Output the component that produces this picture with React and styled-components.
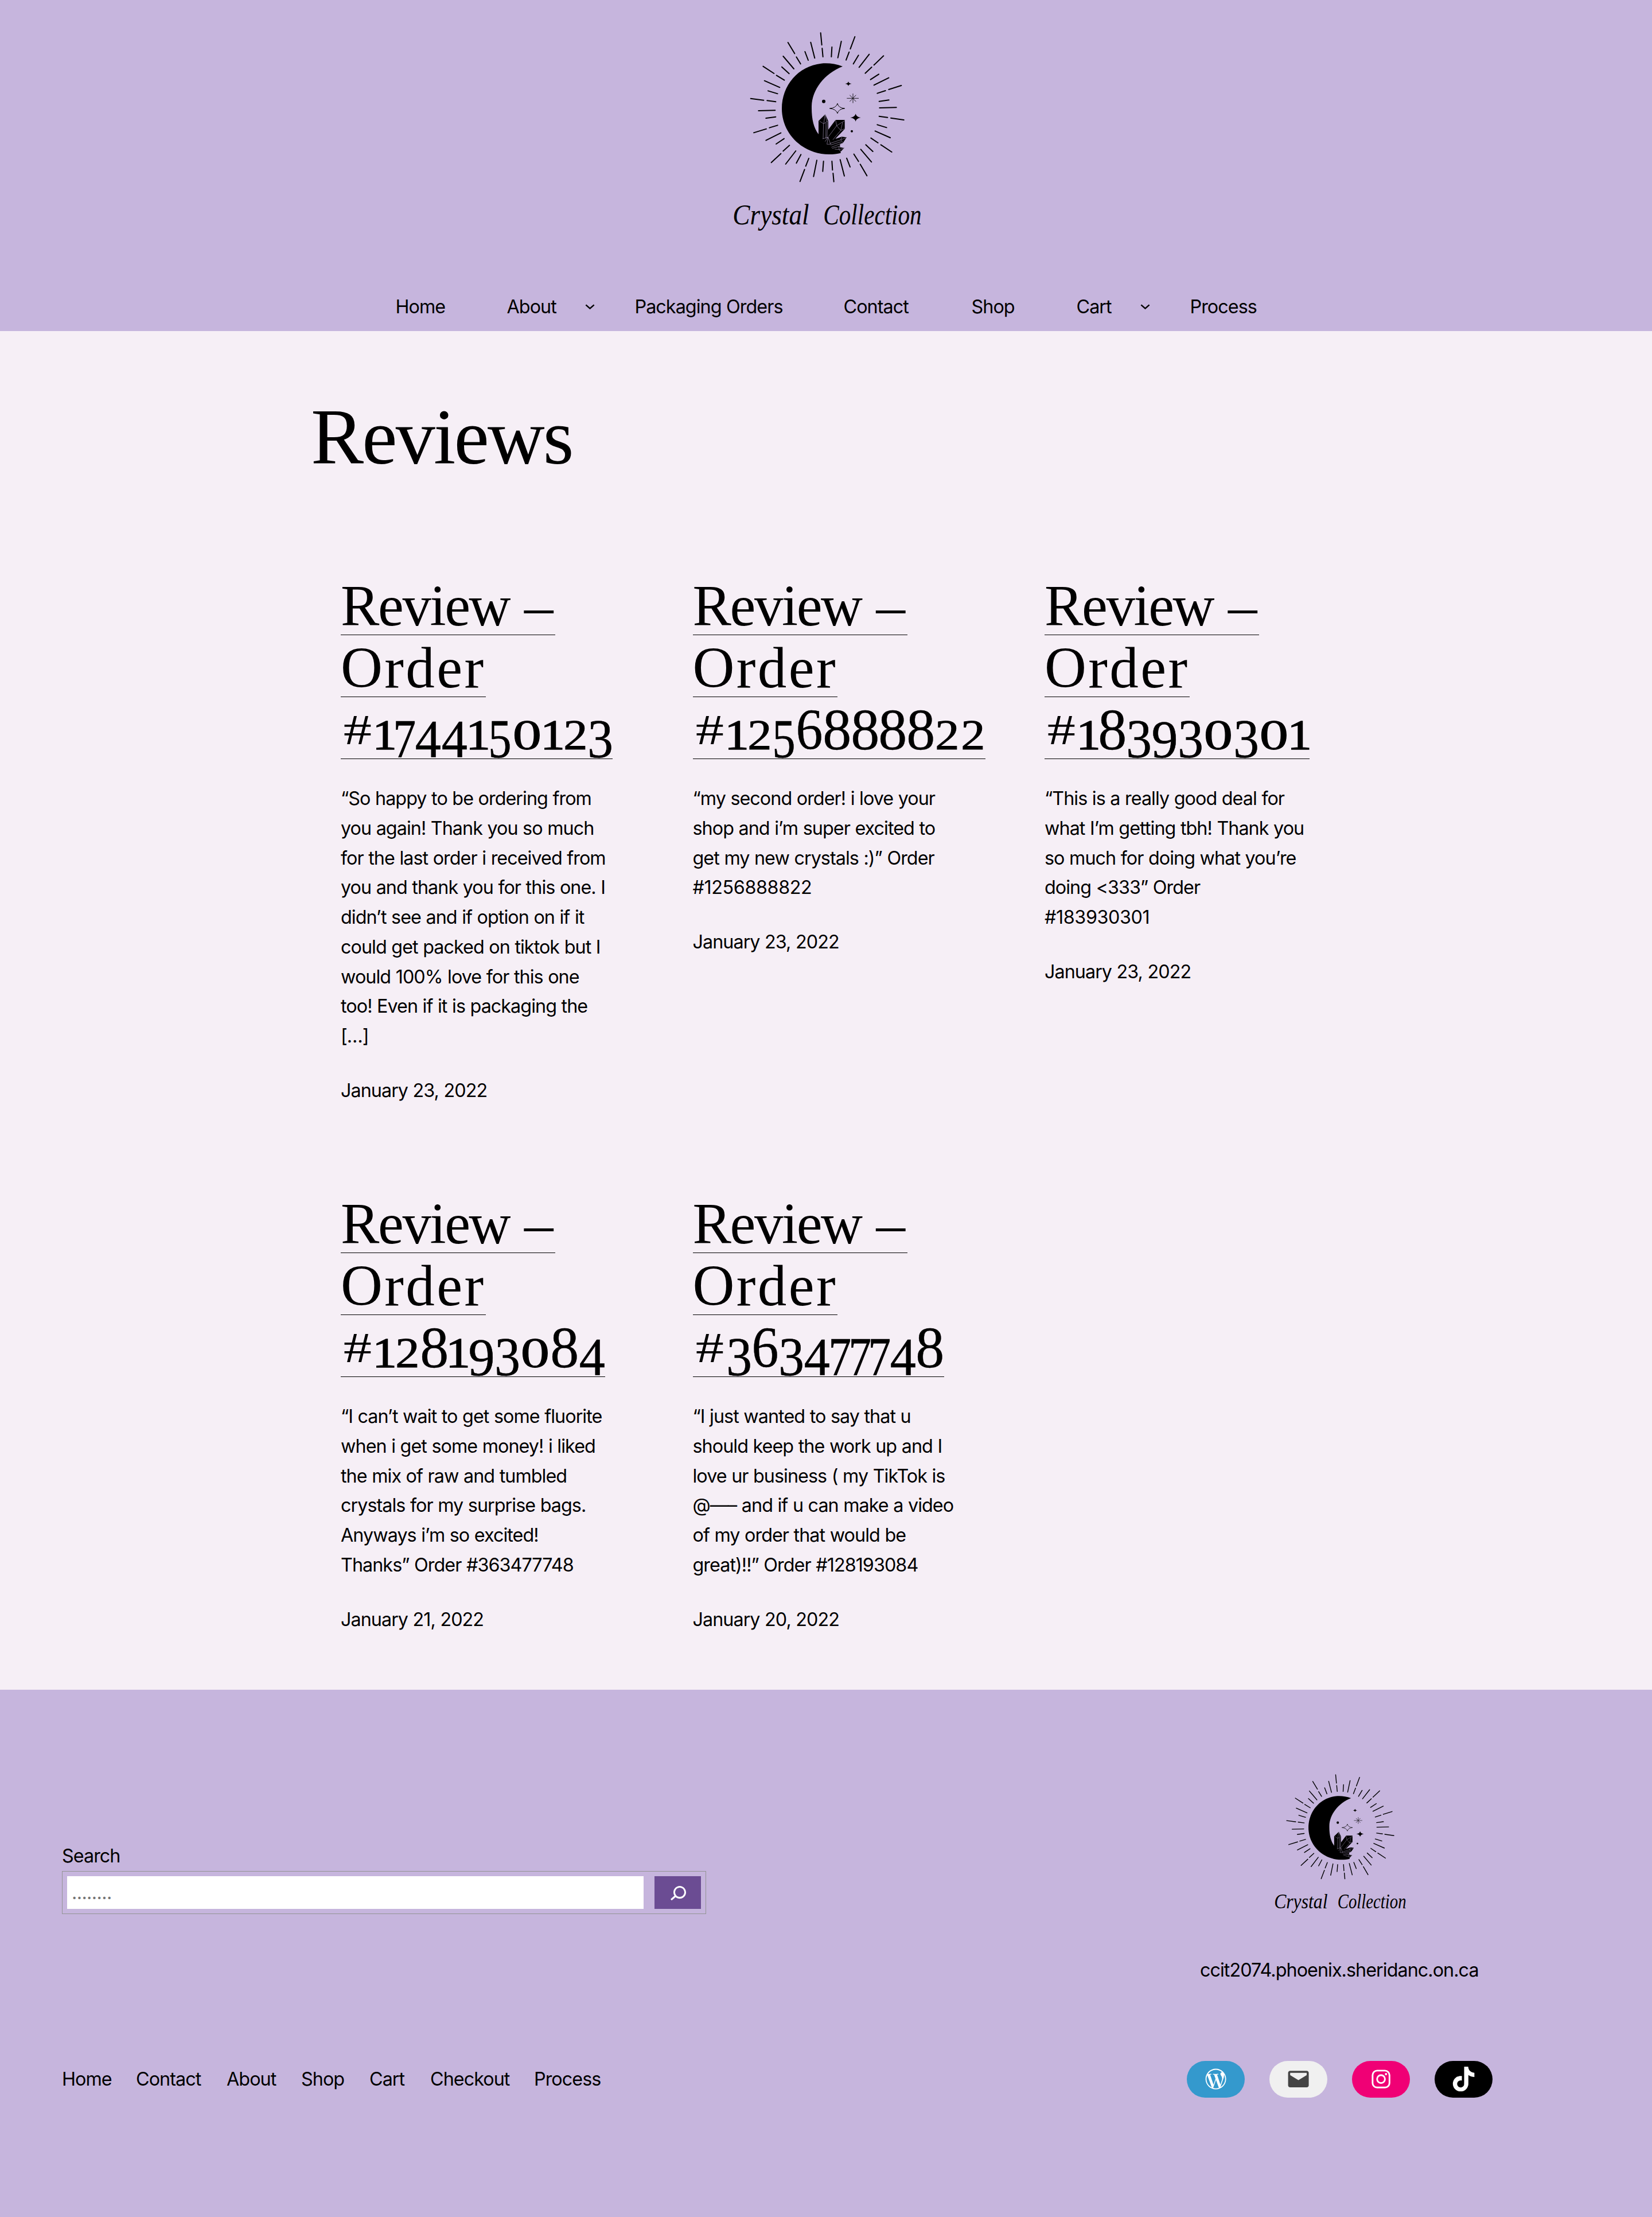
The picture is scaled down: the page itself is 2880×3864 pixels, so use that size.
import React from "react";
import styled, { createGlobalStyle } from "styled-components";

const colors = { lilac: "#c6b5dd", blush: "#f6eff6", plum: "#6b4c93", ink: "#000" };

const GlobalStyle = createGlobalStyle`
  * { box-sizing: border-box; }
  body { margin: 0; background: ${colors.lilac}; color: ${colors.ink}; font-family: Inter, "Noto Sans", sans-serif; font-size: 32.3px; line-height: 51.75px; letter-spacing: -0.95px; word-spacing: 0.4px; }
  h1, h2, p { margin: 0; font-weight: 400; }
  a { color: inherit; text-decoration: none; }
`;

const Page = styled.div`
  width: 2880px;
  height: 3864px;
  display: flex;
  flex-direction: column;
`;

const Header = styled.header`
  height: 577px;
  padding-top: 30px;
  background: ${colors.lilac};
  display: flex;
  flex-direction: column;
  align-items: center;
`;

const LogoSvg = styled.svg`
  display: block;
  flex: none;
  overflow: visible;
  width: ${(p) => p.$size}px;
  height: ${(p) => p.$size}px;
`;

const Wordmark = styled.text`
  font-family: "Liberation Serif", serif;
  font-style: italic;
  font-size: 150px;
  letter-spacing: 0;
`;

const Nav = styled.nav`
  display: flex;
  align-items: center;
  margin-top: 79px;
`;

const NavItem = styled.div`
  display: flex;
  align-items: center;
  width: ${(p) => p.$width}px;
  white-space: nowrap;
`;

const Chevron = styled.svg`
  width: 19px;
  height: 19px;
  margin-left: 49px;
  fill: none;
  stroke: ${colors.ink};
  stroke-width: 1.5;
`;

const Main = styled.main`
  height: 2368px;
  padding: 110px 0 0 542px;
  background: ${colors.blush};
`;

const Title = styled.h1`
  font-family: "Liberation Serif", serif;
  font-size: 138px;
  line-height: 150px;
  letter-spacing: -2.8px;
`;

const Grid = styled.div`
  display: grid;
  grid-template-columns: repeat(3, 613.5px);
  grid-template-rows: 1077px auto;
  padding: 162px 0 0 52px;
`;

const CardTitle = styled.h2`
  font-family: "Liberation Serif", serif;
  font-size: 101px;
  line-height: 115px;
  word-spacing: 3px;
  margin-bottom: 43px;
`;

const TitleLine = styled.span`
  display: block;
  width: ${(p) => (p.$width ? `${p.$width}px` : "fit-content")};
  height: 108px;
  white-space: nowrap;
  letter-spacing: ${(p) => p.$spacing || 0}px;
  border-bottom: 1px solid ${colors.ink};
`;

const Digit = styled.span`
  display: inline-flex;
  justify-content: center;
  width: ${(p) => p.$w}px;
  font-size: ${(p) => p.$size}px;
  line-height: 1;
  -webkit-text-stroke: ${(p) => p.$stroke}px ${colors.ink};
  transform: translateY(${(p) => p.$dy}px) scaleX(${(p) => p.$sx});
`;

const Excerpt = styled.p`
  white-space: pre;
`;

const OrderNumber = styled.span`
  letter-spacing: -0.4px;
`;

const PostDate = styled.p`
  margin-top: 43px;
`;

const Footer = styled.footer`
  flex: 1;
  background: ${colors.lilac};
  padding: 129px 278px 0 108px;
`;

const FooterTop = styled.div`
  display: flex;
  justify-content: space-between;
`;

const SearchForm = styled.form`
  width: 1123px;
  padding-top: 135px;
`;

const SearchLabel = styled.label`
  display: block;
  height: 52px;
`;

const SearchBox = styled.div`
  display: flex;
  justify-content: space-between;
  height: 75px;
  padding: 8px;
  border: 1px solid #949494;
`;

const SearchInput = styled.input`
  width: 1005px;
  height: 57px;
  padding: 0 8px;
  border: 0;
  background: #fff;
  font: inherit;
  letter-spacing: -0.6px;
  &::placeholder { color: #757575; opacity: 1; }
`;

const SearchButton = styled.button`
  width: 81px;
  height: 57px;
  padding: 0;
  border: 0;
  background: ${colors.plum};
  display: flex;
  align-items: center;
  justify-content: center;
`;

const SearchIcon = styled.svg`
  width: 48px;
  height: 48px;
  fill: #fff;
`;

const Brand = styled.div`
  width: 518px;
  display: flex;
  flex-direction: column;
  padding-left: 8px;
`;

const BrandLogo = styled.div`
  padding-left: 102.5px;
`;

const SiteAddress = styled.p`
  margin-top: 54px;
  white-space: nowrap;
`;

const FooterBottom = styled.div`
  display: flex;
  align-items: center;
  justify-content: space-between;
  height: 64px;
  margin-top: 132px;
`;

const FooterNav = styled.nav`
  display: flex;
`;

const Social = styled.div`
  display: flex;
  gap: 43px;
`;

const SocialLink = styled.a`
  width: 101px;
  height: 64px;
  border-radius: 32px;
  background: ${(p) => p.$bg};
  color: ${(p) => p.$fg};
  display: flex;
  align-items: center;
  justify-content: center;
  svg { width: 43.2px; height: 43.2px; fill: currentColor; }
`;

const rays = [
  [572, 82, 578, 145], [580, 163, 584, 207], [520, 131, 541, 214], [490, 180, 507, 225],
  [401, 132, 436, 190], [445, 208, 467, 244], [376, 204, 432, 270], [369, 260, 407, 295],
  [271, 257, 328, 294], [341, 304, 382, 329], [278, 332, 358, 367], [297, 385, 347, 400],
  [206, 425, 274, 434], [292, 436, 337, 442], [247, 489, 334, 487], [286, 528, 337, 521],
  [222, 604, 288, 584], [304, 578, 347, 565], [286, 644, 364, 605], [339, 663, 381, 635],
  [314, 760, 364, 713], [376, 700, 409, 670], [389, 768, 442, 699], [445, 763, 469, 718],
  [464, 859, 488, 796], [494, 779, 510, 738], [535, 833, 552, 748], [583, 806, 587, 753],
  [641, 860, 637, 816], [634, 799, 631, 753], [696, 830, 674, 745], [726, 783, 708, 737],
  [814, 829, 779, 769], [770, 754, 746, 716], [838, 757, 782, 691], [845, 702, 808, 667],
  [944, 705, 887, 667], [872, 657, 835, 632], [936, 630, 857, 595], [917, 577, 868, 562],
  [1007, 537, 939, 527], [922, 524, 878, 518], [968, 472, 880, 474], [929, 433, 878, 440],
  [994, 357, 928, 378], [911, 384, 868, 398], [928, 317, 851, 355], [876, 298, 833, 326],
  [901, 202, 851, 250], [839, 261, 805, 293], [826, 194, 773, 262], [770, 199, 743, 244],
  [751, 102, 727, 166], [721, 182, 705, 224], [680, 126, 662, 212], [631, 156, 628, 207],
];

function Logo({ size }) {
  return (
    <LogoSvg $size={size} viewBox="0 0 1200 1200" role="img" aria-label="Crystal Collection">
      <g stroke="#000" strokeWidth="6" strokeLinecap="round">
        {rays.map(([x1, y1, x2, y2], i) => (
          <line key={i} x1={x1} y1={y1} x2={x2} y2={y2} />
        ))}
      </g>
      <path d="M687 257C650 243 612 239 575 242C455 255 369 356 369 478C369 610 478 716 615 717C640 717 658 715 677 710L670 640L561 612C535 578 524 530 525 465C527 380 590 295 687 257Z" />
      <circle cx="588" cy="440" r="9" />
      <circle cx="735" cy="596" r="6" />
      <path d="M717 336Q719 347 734 348Q719 350 717 360Q715 350 700 348Q715 347 717 336Z" />
      <path d="M755 505Q759 522 782 525Q759 528 755 545Q751 528 727 525Q751 522 755 505Z" />
      <path d="M660 451Q665 475 698 477Q665 480 660 503Q653 480 619 477Q653 475 660 451Z" fill="none" stroke="#000" strokeWidth="3" />
      <path d="M741 399V449M709 424H771M724 407L757 441M757 407L724 441" stroke="#000" strokeWidth="2.5" />
      <g stroke={colors.lilac} strokeWidth="1.6" strokeLinejoin="round">
        <path d="M561 640V542L596 508L612 544V640Z" stroke="none" fill="#000" />
        <path d="M612 588L650 537H698V584L640 645H612Z" stroke="none" fill="#000" />
        <path d="M610 650L682 625L708 628L689 657L650 677L696 683L677 703L650 710L590 690Z" stroke="none" fill="#000" />
        <path fill="none" d="M565 543L588 557L610 543M588 557L595 510L605 546M587 557L585 636M600 552L599 634M608 546L605 632M582 636L611 627M650 537L656 567L698 541M656 567L677 592L697 583M677 592L687 550M656 567L613 624M677 592L636 641M611 627L595 650M611 627L605 664H624L611 627M620 660L677 641L683 626M677 641L705 630M677 641L689 657M624 668L680 651M628 680L684 658M632 686L668 676L694 683M646 690L668 692L694 686M668 676V692L677 702" />
      </g>
      <Wordmark x="112" y="1082" textLength="400" lengthAdjust="spacingAndGlyphs">Crystal</Wordmark>
      <Wordmark x="586" y="1082" textLength="514" lengthAdjust="spacingAndGlyphs">Collection</Wordmark>
    </LogoSvg>
  );
}

// Advance, font size, horizontal scale, drop and stroke that give lining figures an old-style shape.
const figures = {
  "#": [59, 73, 1.35, -9, 0],
  0: [54, 74, 1.36, 0, 1],
  1: [35, 74, 1.14, 0, 1.6],
  2: [44.5, 74, 1.14, 0, 1],
  3: [43, 95, 0.94, 14, 0.6],
  4: [46.5, 94, 0.96, 13, 0.6],
  5: [41, 96, 0.84, 14, 0.6],
  6: [48, 102, 0.92, 0, 0.4],
  7: [34.5, 95, 0.84, 14, 0.6],
  8: [48.5, 102, 0.98, 0, 0.4],
  9: [47, 94, 0.98, 14, 0.6],
};

function OldStyle({ text }) {
  return [...text].map((c, i) => {
    const [w, size, sx, dy, stroke] = figures[c];
    return <Digit key={i} $w={w} $size={size} $sx={sx} $dy={dy} $stroke={stroke}>{c}</Digit>;
  });
}

const reviews = [
  {
    order: "#1744150123",
    date: "January 23, 2022",
    text: "“So happy to be ordering from\nyou again! Thank you so much\nfor the last order i received from\nyou and thank you for this one. I\ndidn’t see and if option on if it\ncould get packed on tiktok but I\nwould 100% love for this one\ntoo! Even if it is packaging the\n[…]",
  },
  {
    order: "#1256888822",
    date: "January 23, 2022",
    text: "“my second order! i love your\nshop and i’m super excited to\nget my new crystals :)” Order\n#1256888822",
  },
  {
    order: "#183930301",
    date: "January 23, 2022",
    text: "“This is a really good deal for\nwhat I’m getting tbh! Thank you\nso much for doing what you’re\ndoing <333” Order\n#183930301",
  },
  {
    order: "#128193084",
    date: "January 21, 2022",
    text: "“I can’t wait to get some fluorite\nwhen i get some money! i liked\nthe mix of raw and tumbled\ncrystals for my surprise bags.\nAnyways i’m so excited!\nThanks” Order #363477748",
  },
  {
    order: "#363477748",
    date: "January 20, 2022",
    text: "“I just wanted to say that u\nshould keep the work up and I\nlove ur business ( my TikTok is\n@—– and if u can make a video\nof my order that would be\ngreat)!!” Order #128193084",
  },
];

const navItems = [
  ["Home", 194], ["About", 223, true], ["Packaging Orders", 364], ["Contact", 223],
  ["Shop", 183], ["Cart", 198, true], ["Process", 116],
];

const footerItems = [
  ["Home", 129], ["Contact", 158], ["About", 130], ["Shop", 119], ["Cart", 106], ["Checkout", 181], ["Process", 120],
];

export default function App() {
  return (
    <Page>
      <GlobalStyle />
      <Header>
        <Logo size={400} />
        <Nav>
          {navItems.map(([label, width, sub]) => (
            <NavItem key={label} $width={width}>
              <a href="#">{label}</a>
              {sub && <Chevron viewBox="0 0 12 12"><path d="M1.5 4L6 8L10.5 4" /></Chevron>}
            </NavItem>
          ))}
        </Nav>
      </Header>
      <Main>
        <Title>Reviews</Title>
        <Grid>
          {reviews.map((r) => (
            <article key={r.order}>
              <CardTitle>
                <a href="#">
                  <TitleLine $width={374} $spacing={-2.4}>Review –</TitleLine>
                  <TitleLine $width={252.5} $spacing={3.4}>Order</TitleLine>
                  <TitleLine><OldStyle text={r.order} /></TitleLine>
                </a>
              </CardTitle>
              <Excerpt>
                {r.text.split(/(^#\d+)/m).filter(Boolean).map((part, i) =>
                  part.startsWith("#") ? <OrderNumber key={i}>{part}</OrderNumber> : part
                )}
              </Excerpt>
              <PostDate>{r.date}</PostDate>
            </article>
          ))}
        </Grid>
      </Main>
      <Footer>
        <FooterTop>
          <SearchForm>
            <SearchLabel htmlFor="search">Search</SearchLabel>
            <SearchBox>
              <SearchInput id="search" placeholder="........" />
              <SearchButton type="button" aria-label="Search">
                <SearchIcon viewBox="0 0 24 24">
                  <path d="M13.5 6C10.5 6 8 8.5 8 11.5c0 1.1.3 2.1.9 3l-3.4 3 1 1.1 3.4-2.9c1 .9 2.2 1.4 3.6 1.4 3 0 5.5-2.5 5.5-5.5C19 8.5 16.5 6 13.5 6zm0 9.5c-2.2 0-4-1.8-4-4s1.8-4 4-4 4 1.8 4 4-1.8 4-4 4z" />
                </SearchIcon>
              </SearchButton>
            </SearchBox>
          </SearchForm>
          <Brand>
            <BrandLogo>
              <Logo size={280} />
            </BrandLogo>
            <SiteAddress>ccit2074.phoenix.sheridanc.on.ca</SiteAddress>
          </Brand>
        </FooterTop>
        <FooterBottom>
          <FooterNav>
            {footerItems.map(([label, width]) => (
              <NavItem key={label} $width={width}><a href="#">{label}</a></NavItem>
            ))}
          </FooterNav>
          <Social>
            <SocialLink href="#" aria-label="WordPress" $bg="#3499cd" $fg="#fff">
              <svg viewBox="0 0 24 24"><path d="M12.158,12.786L9.46,20.625c0.806,0.237,1.657,0.366,2.54,0.366c1.047,0,2.051-0.181,2.986-0.51c-0.024-0.038-0.046-0.079-0.065-0.124L12.158,12.786z M3.009,12c0,3.559,2.068,6.634,5.067,8.092L3.788,8.341C3.289,9.459,3.009,10.696,3.009,12z M18.069,11.546c0-1.112-0.399-1.881-0.741-2.48c-0.456-0.741-0.883-1.368-0.883-2.109c0-0.826,0.627-1.596,1.51-1.596c0.04,0,0.078,0.005,0.116,0.007C16.472,3.904,14.34,3.009,12,3.009c-3.141,0-5.904,1.612-7.512,4.052c0.211,0.007,0.41,0.011,0.579,0.011c0.94,0,2.396-0.114,2.396-0.114C7.947,6.93,8.004,7.642,7.52,7.699c0,0-0.487,0.057-1.029,0.085l3.274,9.739l1.968-5.901l-1.401-3.838C9.848,7.756,9.389,7.699,9.389,7.699C8.904,7.67,8.961,6.93,9.446,6.958c0,0,1.484,0.114,2.368,0.114c0.94,0,2.397-0.114,2.397-0.114c0.485-0.028,0.542,0.684,0.057,0.741c0,0-0.488,0.057-1.029,0.085l3.249,9.665l0.897-2.996C17.841,13.284,18.069,12.316,18.069,11.546z M19.889,7.686c0.039,0.286,0.06,0.593,0.06,0.924c0,0.912-0.171,1.938-0.684,3.22l-2.746,7.94c2.673-1.558,4.47-4.454,4.47-7.771C20.991,10.436,20.591,8.967,19.889,7.686z M12,22C6.486,22,2,17.514,2,12C2,6.486,6.486,2,12,2c5.514,0,10,4.486,10,10C22,17.514,17.514,22,12,22z" /></svg>
            </SocialLink>
            <SocialLink href="#" aria-label="Mail" $bg="#f0f0f0" $fg="#444">
              <svg viewBox="0 0 24 24"><path d="M20,4H4C2.895,4,2,4.895,2,6v12c0,1.105,0.895,2,2,2h16c1.105,0,2-0.895,2-2V6C22,4.895,21.105,4,20,4z M20,8.236l-8,4.882L4,8.236V6h16V8.236z" /></svg>
            </SocialLink>
            <SocialLink href="#" aria-label="Instagram" $bg="#f00075" $fg="#fff">
              <svg viewBox="0 0 24 24">
                <rect x="3.81" y="3.81" width="16.38" height="16.38" rx="4.4" fill="none" stroke="currentColor" strokeWidth="1.62" />
                <circle cx="12" cy="12" r="3.81" fill="none" stroke="currentColor" strokeWidth="1.62" />
                <circle cx="16.8" cy="7.2" r="1.08" />
              </svg>
            </SocialLink>
            <SocialLink href="#" aria-label="TikTok" $bg="#000" $fg="#fff">
              <svg viewBox="0 0 32 32"><path d="M16.708 0.027c1.745-0.027 3.48-0.011 5.213-0.027 0.105 2.041 0.839 4.12 2.333 5.563 1.491 1.479 3.6 2.156 5.652 2.385v5.369c-1.923-0.063-3.855-0.463-5.6-1.291-0.76-0.344-1.468-0.787-2.161-1.24-0.009 3.896 0.016 7.787-0.025 11.667-0.104 1.864-0.719 3.719-1.803 5.255-1.744 2.557-4.771 4.224-7.88 4.276-1.907 0.109-3.812-0.411-5.437-1.369-2.693-1.588-4.588-4.495-4.864-7.615-0.032-0.667-0.043-1.333-0.016-1.984 0.24-2.537 1.495-4.964 3.443-6.615 2.208-1.923 5.301-2.839 8.197-2.297 0.027 1.975-0.052 3.948-0.052 5.923-1.323-0.428-2.869-0.308-4.025 0.495-0.844 0.547-1.485 1.385-1.819 2.333-0.276 0.676-0.197 1.427-0.181 2.145 0.317 2.188 2.421 4.027 4.667 3.828 1.489-0.016 2.916-0.88 3.692-2.145 0.251-0.443 0.532-0.896 0.547-1.417 0.131-2.385 0.079-4.76 0.095-7.145 0.011-5.375-0.016-10.735 0.025-16.093z" /></svg>
            </SocialLink>
          </Social>
        </FooterBottom>
      </Footer>
    </Page>
  );
}
